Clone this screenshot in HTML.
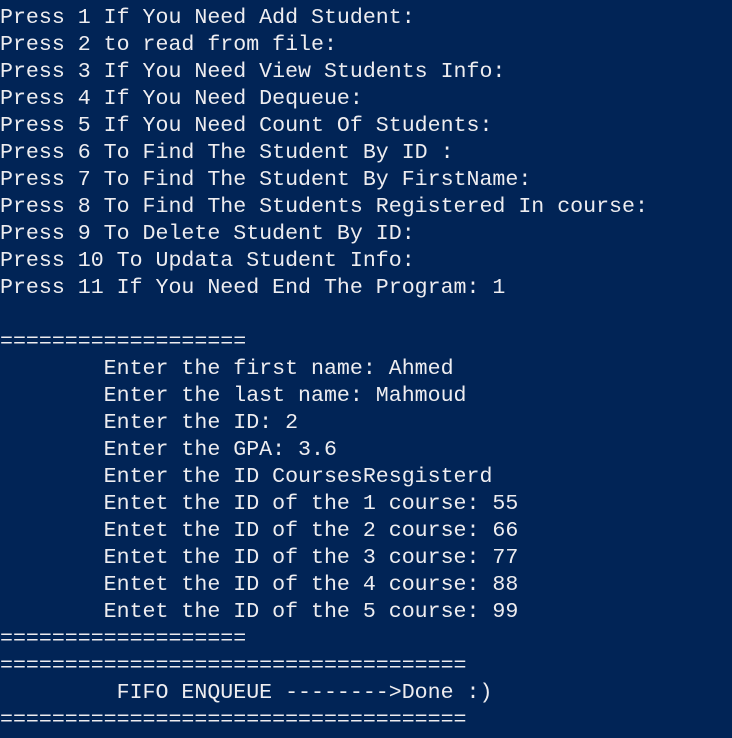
<!DOCTYPE html>
<html><head><meta charset="utf-8"><style>
html,body{margin:0;padding:0;background:#012456;width:732px;height:738px;overflow:hidden}
pre{margin:0;padding:5px 0 0 0;font-family:"Liberation Mono",monospace;font-size:21.6px;line-height:27px;color:#eeedf0;white-space:pre}
</style></head><body><pre>Press 1 If You Need Add Student:
Press 2 to read from file:
Press 3 If You Need View Students Info:
Press 4 If You Need Dequeue:
Press 5 If You Need Count Of Students:
Press 6 To Find The Student By ID :
Press 7 To Find The Student By FirstName:
Press 8 To Find The Students Registered In course:
Press 9 To Delete Student By ID:
Press 10 To Updata Student Info:
Press 11 If You Need End The Program: 1

===================
        Enter the first name: Ahmed
        Enter the last name: Mahmoud
        Enter the ID: 2
        Enter the GPA: 3.6
        Enter the ID CoursesResgisterd
        Entet the ID of the 1 course: 55
        Entet the ID of the 2 course: 66
        Entet the ID of the 3 course: 77
        Entet the ID of the 4 course: 88
        Entet the ID of the 5 course: 99
===================
====================================
         FIFO ENQUEUE --------&gt;Done :)
====================================</pre></body></html>
